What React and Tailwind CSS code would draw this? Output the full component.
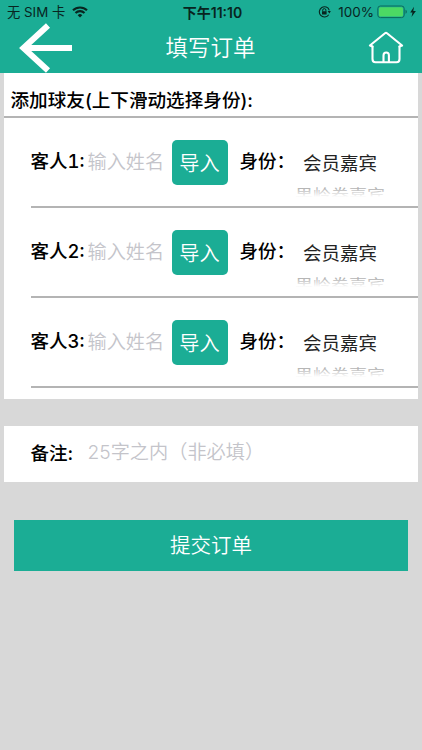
import React, { useState } from 'react';

const GUESTS = [1, 2, 3];
const ROLES = ['会员嘉宾', '果岭券嘉宾'];

const BackArrow = () => (
  <svg width="55" height="50" viewBox="0 0 55 50" fill="none" stroke="#fff" strokeWidth="6">
    <path d="M30 2.5 5.500 25l24.500 22.5M5 25h49" />
  </svg>
);

const HomeIcon = () => (
  <svg width="36" height="34" viewBox="0 0 36 34" fill="none" stroke="#fff" strokeWidth="2.100" strokeLinecap="round" strokeLinejoin="round">
    <path d="M4.500 15.500V28q0 3.300 3 3.300H28.500q3 0 3-3.300V15.500" />
    <path d="M4.500 15.500 1.900 14.500 17 2.300q1-.8 2 0l15.100 12.200-2.600 1" />
    <path d="M15.500 31v-6.500q0-3 2.700-3T20.900 24.500V31" />
  </svg>
);

const WifiIcon = () => (
  <svg width="16" height="12" viewBox="0 0 16 12" fill="none" stroke="#08251f" strokeWidth="2.100">
    <path d="M1 4.300a10 10 0 0 1 14 0M3.500 7a6.400 6.400 0 0 1 9 0" />
    <path d="M8 11.500 5.700 9.200a3.200 3.200 0 0 1 4.600 0z" fill="#08251f" stroke="none" />
  </svg>
);

const RotationLock = () => (
  <svg width="13" height="12" viewBox="0 0 13 12" fill="none" stroke="#08251f" strokeWidth="1.100">
    <path d="M11.300 4.300A5.100 5.100 0 1 0 10.700 8.700" />
    <path d="M9.600 5h3.200l-1.400 2.400z" fill="#08251f" stroke="none" />
    <path d="M4.700 5.500V4.200a1.600 1.600 0 0 1 3.200 0v1.300" strokeWidth="1" />
    <rect x="4" y="5.200" width="4.600" height="3.400" rx=".5" fill="#08251f" stroke="none" />
  </svg>
);

const Battery = () => (
  <svg width="40" height="14" viewBox="0 0 40 14">
    <rect x=".8" y="1" width="26.400" height="11.600" rx="2.600" fill="none" stroke="#0d6b5a" strokeWidth="1" />
    <rect x="2" y="2.200" width="24" height="9.200" rx="1.500" fill="#4cd964" />
    <path d="M28.500 4.800q1.400.6 1.400 2t-1.400 2z" fill="#0d6b5a" />
    <path d="M37 1.800 33.200 7.600h2.300L34.500 12l4.400-6h-2.600z" fill="#08251f" />
  </svg>
);

const StatusBar = () => (
  <div className="flex h-6 items-center justify-between pl-[7px] pr-[5px] text-[#08251f]">
    <div className="flex w-[150px] items-center gap-[7px]">
      <span className="whitespace-nowrap pt-px text-[13.300px]">无 SIM 卡</span>
      <WifiIcon />
    </div>
    <span className="ml-px whitespace-nowrap pt-px text-[14px] font-semibold">下午11:10</span>
    <div className="flex w-[150px] items-center justify-end">
      <RotationLock />
      <span className="ml-[7px] mr-[3px] pt-px text-[13.500px]">100%</span>
      <Battery />
    </div>
  </div>
);

const GuestRow = ({ index, name, onChange }) => (
  <div className="ml-[27px] flex h-[90px] items-start border-b-2 border-[#b4b4b4]">
    <label className="mt-[29px] w-[57px] shrink-0 whitespace-nowrap text-[18.500px] font-medium leading-7 tabular-nums text-black">客人{index}:</label>
    <input
      className="mt-[30px] h-7 w-[84px] shrink-0 text-[19.200px] font-[350] outline-none placeholder:text-[#c4c4ca]"
      placeholder="输入姓名"
      value={name}
      onChange={e => onChange(e.target.value)}
    />
    <button className="mt-[22px] h-[45px] w-[56px] shrink-0 rounded-[5px] bg-[#1bad95] pt-[3px] text-[20.200px] font-[350] text-white">导入</button>
    <span className="ml-3 mt-[29px] w-[54px] shrink-0 whitespace-nowrap text-[18.500px] font-medium leading-7 text-black">身份：</span>
    <div className="mt-[31px] flex w-[93px] flex-col items-center">
      <span className="h-7 whitespace-nowrap text-[18.500px] leading-7 text-[#222]">{ROLES[0]}</span>
      {/* next wheel item, flattened and fading out */}
      <div className="relative mt-[9px] h-3">
        <span className="block origin-top scale-y-[.8] whitespace-nowrap text-[18px] leading-[22px] text-[#a0a0a0]">{ROLES[1]}</span>
        <div className="absolute inset-x-0 top-0 h-[11px] bg-linear-to-b from-white/0 to-white" />
        <div className="absolute inset-x-0 top-[11px] h-[9px] bg-white" />
      </div>
    </div>
  </div>
);

const App = () => {
  const [names, setNames] = useState(['', '', '']);
  const [remark, setRemark] = useState('');

  return (
    <div className="h-[750px] w-full overflow-hidden bg-[#d8d8d8] font-[Inter,'Noto_Sans_CJK_SC',sans-serif]">
      <header className="h-[72.500px] bg-[#1bad95]">
        <StatusBar />
        <div className="flex h-[48px] items-center justify-between pl-[18px] pr-[18px]">
          <BackArrow />
          <h1 className="mr-5 text-[22.500px] font-[350] text-white">填写订单</h1>
          <HomeIcon />
        </div>
      </header>

      <main className="pl-[3.500px] pr-1">
        <section className="h-[326px] bg-white">
          <h2 className="h-[45.500px] border-b-2 border-[#b4b4b4] pl-[7px] pt-[13px] text-[18.600px] font-medium leading-7 text-black">添加球友(上下滑动选择身份):</h2>
          {GUESTS.map((g, i) => (
            <GuestRow
              key={g}
              index={g}
              name={names[i]}
              onChange={v => setNames(names.map((n, j) => (j === i ? v : n)))}
            />
          ))}
        </section>

        <section className="mt-[27px] flex h-[56px] items-center bg-white pl-[27px]">
          <label className="w-[57px] text-[18.500px] font-medium text-black">备注:</label>
          <input
            className="mb-1 h-8 w-[300px] text-[19.200px] font-[350] outline-none placeholder:text-[#c4c4ca]"
            placeholder="25字之内（非必填）"
            value={remark}
            onChange={e => setRemark(e.target.value)}
          />
        </section>

        <button className="ml-[10.500px] mt-[38px] h-[51px] w-[394px] bg-[#1bad95] pt-[3px] text-[20.500px] font-[350] text-white">提交订单</button>
      </main>
    </div>
  );
};

export default App;
